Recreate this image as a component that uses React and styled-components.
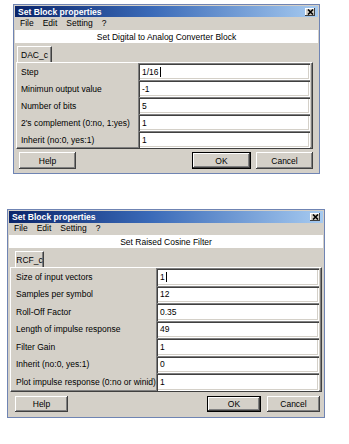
import React from "react";
import styled, { createGlobalStyle } from "styled-components";

const GlobalStyle = createGlobalStyle`
  html, body {
    margin: 0;
    padding: 0;
    background: #fff;
  }
  body {
    font-family: "Liberation Sans", Arial, sans-serif;
    color: #000;
  }
`;

const Page = styled.div`
  width: 349px;
  height: 444px;
  display: flex;
  flex-direction: column;
  overflow: hidden;
`;

const Window = styled.div`
  box-sizing: border-box;
  flex: none;
  margin-top: ${(p) => p.$top}px;
  margin-left: ${(p) => p.$left}px;
  width: ${(p) => p.$width}px;
  height: ${(p) => p.$height}px;
  border: 1px solid #6f84b3;
  padding: 1px;
  background: #d4d0c8;
  display: flex;
  flex-direction: column;
`;

const TitleBar = styled.div`
  flex: none;
  height: ${(p) => p.$h}px;
  display: flex;
  align-items: center;
  justify-content: space-between;
  padding: 0 3px;
  background: linear-gradient(to right, #0a246a 0%, #3a6ab8 45%, #a6caf0 100%);
  color: #fff;
  font-weight: bold;
  font-size: 8.6px;
`;

const CloseBtn = styled.div`
  width: 10px;
  height: 8px;
  background: #d4d0c8;
  box-shadow: inset -1px -1px #404040, inset 1px 1px #fff;
  display: flex;
  align-items: center;
  justify-content: center;
`;

const MenuBar = styled.div`
  flex: none;
  height: ${(p) => p.$h}px;
  display: flex;
  align-items: center;
  gap: 9px;
  padding-left: 5px;
  font-size: 8.5px;
`;

const Subtitle = styled.div`
  flex: none;
  margin-top: 2px;
  height: 13px;
  background: #fff;
  display: flex;
  align-items: center;
  justify-content: center;
  font-size: 8.5px;
`;

const TabStrip = styled.div`
  flex: none;
  margin-top: 3px;
  height: 16px;
  display: flex;
  padding-left: ${(p) => p.$indent}px;
`;

const Tab = styled.div`
  box-sizing: border-box;
  width: ${(p) => p.$w}px;
  height: 16px;
  border-top: 1px solid #fff;
  border-left: 1px solid #fff;
  border-right: 1px solid #404040;
  box-shadow: inset -1px 0 #808080;
  display: flex;
  align-items: center;
  justify-content: center;
  font-size: 8.5px;
`;

const Panel = styled.div`
  flex: none;
  margin: 0 ${(p) => p.$right}px 0 ${(p) => p.$left}px;
  border-top: 1px solid #fff;
  border-left: 1px solid #fff;
  border-right: 1px solid #404040;
  border-bottom: 1px solid #404040;
  box-shadow: inset -1px -1px #808080;
  padding-right: 2px;
  display: grid;
  grid-template-columns: ${(p) => p.$labelWidth}px 1fr;
  grid-auto-rows: ${(p) => p.$rowH}px;
`;

const Label = styled.div`
  display: flex;
  align-items: center;
  padding-left: ${(p) => p.$indent}px;
  font-size: 8.5px;
  white-space: nowrap;
`;

const Field = styled.div`
  display: flex;
  align-items: center;
  padding-left: 4px;
  background: #fff;
  box-shadow: inset 1px 1px #808080, inset 2px 2px #404040,
    inset -1px -1px #fff, inset -2px -2px #d4d0c8;
  font-size: 8.5px;
`;

const Caret = styled.span`
  display: inline-block;
  width: 1px;
  height: 10px;
  margin-left: 1px;
  background: #000;
`;

const ButtonRow = styled.div`
  flex: none;
  margin-top: ${(p) => p.$gapTop}px;
  display: flex;
  gap: ${(p) => p.$gap}px;
  padding: 0 ${(p) => p.$right}px 0 ${(p) => p.$left}px;
`;

const Button = styled.div`
  box-sizing: border-box;
  width: ${(p) => p.$w}px;
  height: ${(p) => p.$h}px;
  margin-left: ${(p) => (p.$push ? "auto" : "0")};
  background: #d4d0c8;
  border: ${(p) => (p.$default ? "1px solid #000" : "none")};
  box-shadow: inset -1px -1px #404040, inset 1px 1px #fff,
    inset -2px -2px #808080;
  display: flex;
  align-items: center;
  justify-content: center;
  font-size: 8.5px;
`;

const CloseGlyph = () => (
  <svg width="7" height="6" viewBox="0 0 7 6">
    <path d="M1 0.5 L6 5.5 M6 0.5 L1 5.5" stroke="#000" strokeWidth="1.6" />
  </svg>
);

const dialogs = [
  {
    top: 4,
    left: 13,
    width: 307,
    height: 170,
    titleH: 11,
    menuH: 11,
    subtitle: "Set Digital to Analog Converter Block",
    tab: "DAC_c",
    tabW: 35,
    tabIndent: 2,
    panelLeft: 1,
    panelRight: 5,
    labelWidth: 121,
    labelIndent: 4,
    rowH: 17,
    btn: { top: 3, left: 4, right: 5, gap: 5, w: 57, h: 17, okW: 59 },
    rows: [
      ["Step", "1/16", true],
      ["Minimun output value", "-1"],
      ["Number of bits", "5"],
      ["2's complement (0:no, 1:yes)", "1"],
      ["Inherit (no:0, yes:1)", "1"],
    ],
  },
  {
    top: 35,
    left: 7,
    width: 318,
    height: 209,
    titleH: 12,
    menuH: 10,
    subtitle: "Set Raised Cosine Filter",
    tab: "RCF_c",
    tabW: 29,
    tabIndent: 6,
    panelLeft: 1,
    panelRight: 1,
    labelWidth: 145,
    labelIndent: 5,
    rowH: 17.5,
    btn: { top: 4, left: 6, right: 3, gap: 6, w: 53, h: 16, okW: 54 },
    rows: [
      ["Size of input vectors", "1", true],
      ["Samples per symbol", "12"],
      ["Roll-Off Factor", "0.35"],
      ["Length of impulse response", "49"],
      ["Filter Gain", "1"],
      ["Inherit (no:0, yes:1)", "0"],
      ["Plot impulse response (0:no or winid)", "1"],
    ],
  },
];

const BlockDialog = ({ d }) => (
  <Window $top={d.top} $left={d.left} $width={d.width} $height={d.height}>
    <TitleBar $h={d.titleH}>
      <span>Set Block properties</span>
      <CloseBtn>
        <CloseGlyph />
      </CloseBtn>
    </TitleBar>
    <MenuBar $h={d.menuH}>
      <span>File</span>
      <span>Edit</span>
      <span>Setting</span>
      <span>?</span>
    </MenuBar>
    <Subtitle>{d.subtitle}</Subtitle>
    <TabStrip $indent={d.tabIndent}>
      <Tab $w={d.tabW}>{d.tab}</Tab>
    </TabStrip>
    <Panel
      $left={d.panelLeft}
      $right={d.panelRight}
      $labelWidth={d.labelWidth}
      $rowH={d.rowH}
    >
      {d.rows.map(([label, value, caret]) => (
        <React.Fragment key={label}>
          <Label $indent={d.labelIndent}>{label}</Label>
          <Field>
            {value}
            {caret && <Caret />}
          </Field>
        </React.Fragment>
      ))}
    </Panel>
    <ButtonRow
      $gapTop={d.btn.top}
      $left={d.btn.left}
      $right={d.btn.right}
      $gap={d.btn.gap}
    >
      <Button $w={d.btn.w} $h={d.btn.h}>
        Help
      </Button>
      <Button $w={d.btn.okW} $h={d.btn.h} $push $default>
        OK
      </Button>
      <Button $w={d.btn.w} $h={d.btn.h}>
        Cancel
      </Button>
    </ButtonRow>
  </Window>
);

export default function App() {
  return (
    <>
      <GlobalStyle />
      <Page>
        {dialogs.map((d) => (
          <BlockDialog key={d.tab} d={d} />
        ))}
      </Page>
    </>
  );
}
